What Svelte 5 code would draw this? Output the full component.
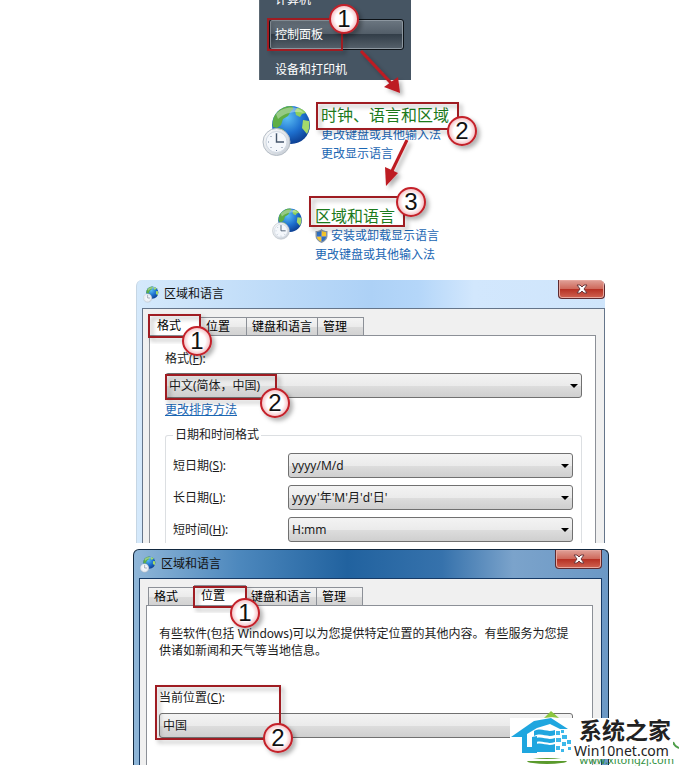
<script lang="ts">
  type Mark = { n: number; x: number; y: number; w: number; h: number; cx: number; cy: number };

  // highlight box + numbered badge, in page coordinates
  const marks: Mark[] = [
    { n: 1, x: 268, y: 19, w: 74, h: 31, cx: 344, cy: 19 },
    { n: 2, x: 317, y: 103, w: 141, h: 26, cx: 462, cy: 131 },
    { n: 3, x: 310, y: 197, w: 94, h: 29, cx: 411, cy: 202 },
    { n: 1, x: 149, y: 315, w: 51, h: 22, cx: 197, cy: 341 },
    { n: 2, x: 166, y: 375, w: 110, h: 24, cx: 275, cy: 403 },
    { n: 1, x: 194, y: 587, w: 52, h: 20, cx: 245, cy: 613 },
    { n: 2, x: 156, y: 686, w: 124, h: 53, cx: 278, cy: 738 }
  ];

  const tabs = ['格式', '位置', '键盘和语言', '管理'];

  const formats = [
    { id: 'short-date', label: '短日期', key: 'S', value: 'yyyy/M/d' },
    { id: 'long-date', label: '长日期', key: 'L', value: "yyyy'年'M'月'd'日'" },
    { id: 'short-time', label: '短时间', key: 'H', value: 'H:mm' }
  ];

  let formatTab = $state(0);
  let placeTab = $state(1);
</script>

{#snippet globe(cls: string)}
  <svg class={cls} viewBox="0 0 50 52" aria-hidden="true">
    <circle cx="29" cy="20" r="19" fill="url(#sea)" />
    <path d="M13 10C17 4 23 1 29 1c3 1 3 3 0 5l-3 5-5 3-2 6-4 3-4-1c-1-4 0-9 2-12z" fill="#5fae45" />
    <path d="M35 3c4 0 7 2 9 5l-4 1-2 3-4-2-1-4z" fill="#8fd05b" />
    <path d="M16 23l5 1 3 4-2 5-4-2z" fill="#4da93c" />
    <path d="M41 15l6 1c1 5 0 9-2 13l-5-6z" fill="#a4d96a" />
    <path d="M14 9C21 1 36 0 42 8c-8-2-18-1-26 6z" fill="#fff" opacity=".35" />
    <circle cx="14.500" cy="37" r="13.500" fill="url(#dial)" stroke="#b4bcc5" />
    <circle cx="14.500" cy="37" r="10.500" fill="#f5f8fc" stroke="#d0d8e2" />
    <path d="M14.500 28v9H22" fill="none" stroke="#45566b" stroke-width="1.400" />
    <path d="M14.500 28v1M14.500 45v1M6 37h1M8.500 31l1 1M8.500 43l1-1M20.500 43l-1-1" stroke="#7788a0" />
  </svg>
{/snippet}

{#snippet tabBar(active: number, pick: (i: number) => void)}
  <div class="tabs" role="tablist">
    {#each tabs as tab, i}
      <button class="tab" class:active={active === i} role="tab" aria-selected={active === i} onclick={() => pick(i)}>{tab}</button>
    {/each}
  </div>
{/snippet}

{#snippet titleBar()}
  <header class="titlebar">
    {@render globe('globe-xs')}
    <h2>区域和语言</h2>
    <button class="close" aria-label="关闭">
      <svg viewBox="0 0 12 10" aria-hidden="true">
        <path d="M1 1h3l2 2 2-2h3L8 5l3 4H8L6 7 4 9H1l3-4z" fill="#fff" stroke="#6b3a3f" />
      </svg>
    </button>
  </header>
{/snippet}

<svg class="defs" aria-hidden="true">
  <defs>
    <radialGradient id="sea" cx=".4" cy=".3" r=".75">
      <stop offset="0" stop-color="#5cc0f5" />
      <stop offset=".55" stop-color="#1e70cf" />
      <stop offset="1" stop-color="#0b3a8c" />
    </radialGradient>
    <linearGradient id="dial" x2="1" y2="1">
      <stop offset="0" stop-color="#fff" />
      <stop offset="1" stop-color="#c3cad3" />
    </linearGradient>
  </defs>
</svg>

<main class="guide">
  <nav class="start-menu">
    <button class="item">计算机</button>
    <button class="item hot">控制面板</button>
    <button class="item">设备和打印机</button>
  </nav>

  <section class="category">
    {@render globe('globe-lg')}
    <div class="links">
      <a class="head" href="#clock">时钟、语言和区域</a>
      <a href="#keyboard">更改键盘或其他输入法</a>
      <a href="#display">更改显示语言</a>
    </div>
  </section>

  <section class="category sub">
    {@render globe('globe-md')}
    <div class="links">
      <a class="head" href="#region">区域和语言</a>
      <a href="#install">
        <svg class="shield" viewBox="0 0 13 14" aria-hidden="true">
          <path d="M6.500 0C5 1.500 3 2 .5 2v5c0 3 2.500 5.500 6 7 3.500-1.500 6-4 6-7V2C10 2 8 1.500 6.500 0z" fill="#8795a5" />
          <path d="M6 2C5 2.600 3.500 3 2 3v4h4z" fill="#2f6fc0" />
          <path d="M7 2c1 .6 2.500 1 4 1v4H7z" fill="#f5c62c" />
          <path d="M2 8h4v4.500C4 11.500 2.300 10 2 8z" fill="#f5c62c" />
          <path d="M7 8h4c-.3 2-2 3.500-4 4.500z" fill="#2f6fc0" />
        </svg>安装或卸载显示语言</a>
      <a href="#input">更改键盘或其他输入法</a>
    </div>
  </section>

  <section class="window light">
    {@render titleBar()}
    <div class="client">
      {@render tabBar(formatTab, (i) => (formatTab = i))}
      <div class="pane">
        <label for="format">格式(<u>F</u>):</label>
        <div class="combo">
          <select id="format"><option>中文(简体，中国)</option></select>
        </div>
        <a class="sort" href="#sort">更改排序方法</a>
        <fieldset>
          <legend>日期和时间格式</legend>
          {#each formats as f}
            <div class="row">
              <label for={f.id}>{f.label}(<u>{f.key}</u>):</label>
              <div class="combo">
                <select id={f.id}><option>{f.value}</option></select>
              </div>
            </div>
          {/each}
        </fieldset>
      </div>
    </div>
  </section>

  <section class="window dark">
    {@render titleBar()}
    <div class="client">
      {@render tabBar(placeTab, (i) => (placeTab = i))}
      <div class="pane">
        <p>有些软件(包括 Windows)可以为您提供特定位置的其他内容。有些服务为您提供诸如新闻和天气等当地信息。</p>
        <label for="place">当前位置(<u>C</u>):</label>
        <div class="combo">
          <select id="place"><option>中国</option></select>
        </div>
      </div>
    </div>
  </section>

  <svg class="marks" viewBox="0 0 679 766" aria-hidden="true">
    <defs>
      <radialGradient id="badge">
        <stop offset="0" stop-color="#fff" />
        <stop offset=".6" stop-color="#fff" />
        <stop offset="1" stop-color="#f3b9bd" />
      </radialGradient>
      <filter id="shade" x="-20%" y="-20%" width="150%" height="150%">
        <feDropShadow dx="3" dy="3" stdDeviation="2" flood-color="#000" flood-opacity=".3" />
      </filter>
    </defs>
    <g class="arrows" filter="url(#shade)">
      <path d="M361 51L391 83" />
      <path class="tip" d="M400 93L384 87 398 77z" />
      <path d="M407 140L391 173" />
      <path class="tip" d="M386 186L385 167 398 173z" />
    </g>
    {#each marks as m}
      <g filter="url(#shade)">
        <rect class="box" x={m.x} y={m.y} width={m.w} height={m.h} />
      </g>
      <g filter="url(#shade)">
        <circle class="badge" cx={m.cx} cy={m.cy} r="14" />
      </g>
      <text x={m.cx} y={m.cy + 8}>{m.n}</text>
    {/each}
  </svg>

  <aside class="brand">
    <div class="brand-main">
      <svg class="house" viewBox="0 0 64 54" aria-hidden="true">
        <path d="M34 6l7-7 8 7-7-1z" fill="#8cc63f" />
        <ellipse cx="37" cy="49" rx="20" ry="3" fill="#5a9a2c" />
        <path d="M0 47h64v2H0z" fill="#fff" />
        <path d="M1 25L24 9l17-3 17 11h-8l-10-5-13 4-10 6v13h5V25l5-1v17H12V25z" fill="#1fa6df" />
        <path d="M24 19c8-4 12 2 21-1v5c-9 3-13-3-21 1zM24 27c8-4 12 2 21-1v4c-9 3-13-3-21 1zM24 33c8-4 12 2 21-1v8H24z" fill="#1fa6df" />
        <path d="M46 19h4v4h-4zM51 18h3v3h-3zM52 23h5v4h-5zM46 26h5v4h-5zM57 28h4v4h-4zM52 30h4v4h-4zM46 34h4v4h-4zM58 35h3v3h-3zM51 37h3v3h-3z" fill="#3db8ea" />
      </svg>
      <div class="brand-text">
        <strong>系统之家</strong>
        <span>Win10net.com</span>
      </div>
      <svg class="swoosh" viewBox="0 0 6 14" aria-hidden="true">
        <path d="M0 4c1 3 3 5 6 6" fill="none" stroke="#4f9e4a" stroke-width="2" />
      </svg>
    </div>
    <div class="brand-url">www.xitongzj.com</div>
  </aside>
</main>

<style>
  :global(body) { background: #fff; }
  .guide {
    position: relative;
    box-sizing: border-box;
    padding: 0 70px 1px 133px;
    overflow: hidden;
    font: 12px/18px "Noto Sans", "Noto Sans CJK SC", sans-serif;
    color: #1b1b1b;
  }
  .defs { position: absolute; width: 0; height: 0; }
  button, select { font: inherit; color: inherit; }

  .start-menu {
    display: flex;
    flex-direction: column;
    gap: 4px;
    box-sizing: border-box;
    width: 152px;
    height: 80px;
    margin-left: 126px;
    padding: 0 7px 0 9px;
    overflow: hidden;
    background: #465563;
    border-left: 1px solid #5b6873;
  }
  .item {
    flex: none;
    height: 31px;
    padding: 0 5px;
    border: 1px solid transparent;
    border-radius: 3px;
    background: none;
    color: #fff;
    text-align: left;
  }
  .item:first-child { margin-top: -16px; }
  .hot {
    border-color: #0d1217;
    box-shadow: inset 0 0 0 1px #8d97a0;
    background: linear-gradient(#6c7781, #525d68 49%, #333e49 50%, #56616b);
  }

  .category { display: flex; margin: 25px 0 0 129px; }
  .sub { margin: 43px 0 0 139px; }
  .globe-lg { width: 50px; height: 52px; margin-right: 9px; }
  .globe-md { width: 31px; height: 36px; margin-right: 12px; }
  .globe-xs { width: 16px; height: 17px; }
  .links { display: flex; flex-direction: column; align-items: flex-start; }
  .links a { color: #1a66b3; line-height: 19px; text-decoration: none; }
  .links .head { color: #1c7a1c; font-size: 16px; line-height: 20px; }
  .shield { width: 13px; height: 14px; margin-right: 3px; vertical-align: -3px; }

  .window {
    display: flex;
    flex-direction: column;
    box-sizing: border-box;
    overflow: hidden;
    border-radius: 6px 6px 0 0;
  }
  .light {
    height: 263px;
    margin: 16px 4px 0 3px;
    padding-left: 5px;
    border-left: 1px solid #c6d6e4;
    background: linear-gradient(90deg, #d5e9fb, #add1f6 50%, #b4d6f9 60%, #d2e7fd 72%, #cfe5fb);
  }
  .dark {
    height: 216px;
    margin-top: 6px;
    padding: 0 6px 0 5px;
    border: 1px solid #12283f;
    border-bottom: 0;
    background: linear-gradient(90deg, #8fb6d8, #4d88bd 22%, #21629f 45%, #3672ac 65%, #7ba3cb 80%, #6b98c5);
  }
  .titlebar { display: flex; align-items: center; flex: none; height: 28px; padding-left: 1px; }
  .titlebar h2 { flex: 1; margin: 0 0 0 5px; font-size: 12px; font-weight: 400; color: #111; }
  .close {
    display: grid;
    place-items: center;
    align-self: flex-start;
    box-sizing: border-box;
    width: 47px;
    height: 19px;
    padding: 0;
    border: 1px solid #5c2a30;
    border-top: 0;
    border-radius: 0 0 4px 4px;
    box-shadow: inset 0 0 0 1px #e8a89f;
    background: linear-gradient(#e0a198, #cf6a5c 48%, #b52f22 50%, #d06352);
  }
  .close svg { width: 12px; height: 10px; }
  .client {
    display: flex;
    flex-direction: column;
    flex: 1;
    padding: 6px 8px 0 6px;
    border: 1px solid #65758a;
    border-bottom: 0;
    background: #f0f0f0;
  }
  .dark .client { border-color: #163a66; }

  .tabs { display: flex; align-items: flex-end; height: 20px; }
  .dark .tabs { padding-left: 2px; }
  .tab {
    min-width: 46px;
    height: 18px;
    padding: 0 5px;
    border: 1px solid #8c9097;
    border-width: 1px 1px 0 0;
    background: linear-gradient(#f4f4f4, #ebebeb 50%, #dcdcdc 51%, #d2d2d2);
    color: #000;
    line-height: 17px;
    text-align: left;
  }
  .tab:first-child { border-left-width: 1px; }
  .tab.active { min-width: 52px; height: 20px; padding-left: 7px; background: #fff; line-height: 16px; }
  .pane { flex: 1; padding: 14px 13px 0 15px; border: 1px solid #8c9097; border-bottom: 0; background: #fff; }
  .pane label { display: block; }
  .light .pane > label { margin-bottom: 5px; }

  .combo { position: relative; height: 25px; }
  .combo::after {
    content: '';
    position: absolute;
    top: 11px;
    right: 4px;
    border: 4px solid transparent;
    border-top-color: #000;
    border-bottom: 0;
    pointer-events: none;
  }
  .combo select {
    appearance: none;
    display: block;
    box-sizing: border-box;
    width: 100%;
    height: 25px;
    padding: 0 16px 0 3px;
    border: 1px solid #707070;
    border-radius: 3px;
    background: linear-gradient(#f3f3f3, #ebebeb 50%, #dddddd 51%, #cfcfcf);
  }
  .sort { display: block; margin: 3px 0 7px; color: #1a66b3; }
  fieldset { margin: 0; padding: 9px 8px 0 7px; border: 1px solid #dcdfe2; border-bottom: 0; border-radius: 3px 3px 0 0; }
  legend { padding: 0 2px; }
  .row { display: grid; grid-template-columns: 115px 1fr; align-items: center; margin-bottom: 7px; }

  .dark .pane { padding: 19px 19px 0 12px; }
  .dark p { margin: 0 0 30px; line-height: 17px; }
  .dark .pane > label { margin-bottom: 6px; }

  .marks { position: absolute; top: 0; left: 0; width: 679px; height: 766px; pointer-events: none; }
  .arrows path { fill: none; stroke: #bd1a20; stroke-width: 3; }
  .arrows .tip { fill: #bd1a20; stroke: none; }
  .box { fill: none; stroke: #9f1a20; stroke-width: 2; }
  .badge { fill: url(#badge); stroke: #c4202a; stroke-width: 2; }
  .marks text { font: 24px "Liberation Sans", sans-serif; text-anchor: middle; fill: #111; }

  .brand { position: absolute; right: 0; bottom: 0; width: 169px; }
  .brand-main { display: flex; height: 41px; background: #fff; }
  .house { flex: none; width: 64px; height: 54px; margin-top: -6px; overflow: visible; }
  .brand-text { display: flex; flex-direction: column; color: #222; }
  .brand-text strong { padding-left: 5px; font-size: 23px; line-height: 24px; }
  .brand-text span { font-size: 14px; line-height: 17px; }
  .swoosh { width: 6px; height: 14px; margin: 20px 0 0 2px; }
  .brand-url {
    display: flex;
    align-items: flex-end;
    justify-content: flex-end;
    height: 7px;
    padding-right: 5px;
    overflow: hidden;
    color: #2f8f3c;
    font-size: 11px;
    line-height: 12px;
  }
</style>
